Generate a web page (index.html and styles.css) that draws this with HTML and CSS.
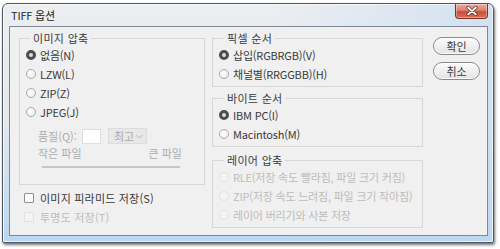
FILE: index.html
```html
<!DOCTYPE html>
<html lang="ko">
<head>
<meta charset="utf-8">
<title>TIFF 옵션</title>
<link rel="stylesheet" href="styles.css">
</head>
<body>
<div class="window">
  <div class="titlebar">
    <span class="title">TIFF 옵션</span>
    <div class="close">
      <svg width="12" height="10" viewBox="0 0 12 10"><path d="M2 1.5 L10 8.5 M10 1.5 L2 8.5" stroke="#5a2a22" stroke-width="3.2" stroke-linecap="round"/><path d="M2 1.5 L10 8.5 M10 1.5 L2 8.5" stroke="#ffffff" stroke-width="1.7" stroke-linecap="round"/></svg>
    </div>
  </div>
  <div class="frame">
    <div class="client">
      <div class="col-left">
        <fieldset class="group g-img">
          <legend>이미지 압축</legend>
          <div class="opt"><span class="radio on"></span>없음(N)</div>
          <div class="opt"><span class="radio"></span>LZW(L)</div>
          <div class="opt"><span class="radio"></span>ZIP(Z)</div>
          <div class="opt"><span class="radio"></span>JPEG(J)</div>
          <div class="quality">
            <span class="qlabel">품질(Q):</span>
            <span class="qbox"></span>
            <span class="qsel"><span>최고</span><svg width="7" height="5" viewBox="0 0 7 5"><path d="M0.5 1 L3.5 4 L6.5 1" fill="none" stroke="#b8b8b8" stroke-width="1"/></svg></span>
          </div>
          <div class="sizes"><span>작은 파일</span><span>큰 파일</span></div>
          <div class="slider"></div>
        </fieldset>
        <div class="check"><span class="cbox"></span>이미지 피라미드 저장(S)</div>
        <div class="check dis"><span class="cbox"></span>투명도 저장(T)</div>
      </div>
      <div class="col-right">
        <fieldset class="group g-pix">
          <legend>픽셀 순서</legend>
          <div class="opt"><span class="radio on"></span>삽입(RGBRGB)(V)</div>
          <div class="opt"><span class="radio"></span>채널별(RRGGBB)(H)</div>
        </fieldset>
        <fieldset class="group g-byte">
          <legend>바이트 순서</legend>
          <div class="opt"><span class="radio on"></span>IBM PC(I)</div>
          <div class="opt"><span class="radio"></span>Macintosh(M)</div>
        </fieldset>
        <fieldset class="group g-layer">
          <legend>레이어 압축</legend>
          <div class="opt dis"><span class="radio"></span>RLE(저장 속도 빨라짐, 파일 크기 커짐)</div>
          <div class="opt dis"><span class="radio"></span>ZIP(저장 속도 느려짐, 파일 크기 작아짐)</div>
          <div class="opt dis"><span class="radio"></span>레이어 버리기와 사본 저장</div>
        </fieldset>
      </div>
      <div class="buttons">
        <button class="btn">확인</button>
        <button class="btn">취소</button>
      </div>
    </div>
  </div>
</div>
</body>
</html>
```

FILE: styles.css
```css
* { box-sizing: border-box; }

html, body {
  margin: 0;
  background: #ffffff;
}

body {
  font-family: "Noto Sans CJK KR", "Noto Sans", sans-serif;
  font-size: 11px;
  color: #3a3a3a;
  width: 500px;
  height: 249px;
  overflow: hidden;
}

.window {
  margin: 3px 0 0 2px;
  width: 492px;
  height: 240px;
  border: 1px solid #4e5560;
  border-radius: 6px 6px 2px 2px;
  background:
    linear-gradient(to right, rgba(233,236,240,0) 0%, rgba(233,236,240,0) 55%, rgba(190,216,240,0.55) 100%),
    linear-gradient(to bottom, #eceef1 0%, #e3e8ed 50%, #b9d7f2 100%);
  box-shadow: inset 0 0 0 1px rgba(255,255,255,0.75), 1px 2px 3px rgba(0,0,0,0.55);
  display: flex;
  flex-direction: column;
}

.titlebar {
  height: 22px;
  display: flex;
  align-items: flex-start;
}

.title {
  margin: 3px 0 0 8px;
  font-size: 11px;
  line-height: 16px;
  color: #262626;
  letter-spacing: -0.2px;
}

.close {
  margin-left: auto;
  margin-right: 5px;
  width: 33px;
  height: 15px;
  border: 1px solid #7a3329;
  border-top: none;
  border-radius: 0 0 4px 4px;
  background: linear-gradient(to bottom, #ebb0a4 0%, #dc7e6b 45%, #c8503a 55%, #d86d55 100%);
  box-shadow: inset 0 0 0 1px rgba(255,255,255,0.35);
  display: flex;
  align-items: center;
  justify-content: center;
}

.close svg { display: block; }

.frame {
  flex: 1;
  padding: 0 5px 6px 6px;
  display: flex;
}

.client {
  flex: 1;
  border: 1px solid #7d8894;
  background: #f0f0f0;
  display: flex;
  align-items: flex-start;
  padding: 4px 7px 0 9px;
}

.col-left { width: 186px; }
.col-right { width: 211px; margin-left: 7px; }
.buttons {
  width: 47px;
  margin-left: 10px;
  margin-top: 6px;
  display: flex;
  flex-direction: column;
  gap: 7px;
}

.group {
  margin: 0;
  padding: 0 0 3px 6px;
  border: 1px solid #d7d7d7;
  min-width: 0;
}

.group legend {
  margin-left: 4px;
  padding: 0 3px;
  line-height: 14px;
  font-size: 11px;
  letter-spacing: 0.3px;
  color: #3c3c3c;
}

.g-img { padding-bottom: 16px; }
.g-byte { margin-top: 4px; }
.g-layer { margin-top: 6px; }
.col-right .group legend { margin-left: 5px; }

.opt {
  height: 19px;
  display: flex;
  align-items: center;
  gap: 4px;
  letter-spacing: -0.2px;
  white-space: nowrap;
}

.radio {
  width: 10px;
  height: 10px;
  border-radius: 50%;
  border: 1px solid #a9a9a9;
  background: radial-gradient(circle at 40% 35%, #ffffff 0%, #f2f2f2 60%, #e0e0e0 100%);
  flex: none;
}

.radio.on {
  border: 3px solid #4d4d4d;
  background: #dcdcdc;
}

.opt.dis { color: #bcbcbc; }
.opt.dis .radio {
  border-color: #e2e2e2;
  background: #f4f4f4;
}

.quality {
  margin-top: 7px;
  height: 16px;
  display: flex;
  align-items: center;
  color: #adadad;
  white-space: nowrap;
}

.qlabel { margin-left: 12px; width: 44px; }

.qbox {
  width: 19px;
  height: 15px;
  background: #ffffff;
  border: 1px solid #dedede;
}

.qsel {
  margin-left: 7px;
  width: 39px;
  height: 16px;
  background: #e8e8e8;
  border: 1px solid #dddddd;
  display: flex;
  align-items: center;
  justify-content: space-between;
  padding: 0 3px 0 5px;
  color: #a9a9a9;
  line-height: 14px;
}

.qsel svg { display: block; flex: none; }

.sizes {
  margin-top: 2px;
  padding: 0 22px 0 12px;
  display: flex;
  justify-content: space-between;
  line-height: 14px;
  color: #adadad;
}

.slider {
  margin: 6px 24px 0 16px;
  height: 2px;
  background: #c6c6c6;
}

.check {
  height: 19px;
  display: flex;
  align-items: center;
  gap: 6px;
  padding-left: 5px;
  letter-spacing: 0.2px;
}

.check:first-of-type { margin-top: 3px; }

.cbox {
  width: 10px;
  height: 10px;
  border: 1px solid #8f8f8f;
  background: #ffffff;
  border-radius: 1px;
}

.check.dis { color: #bcbcbc; }
.check.dis .cbox {
  border-color: #e0e0e0;
  background: #f3f3f3;
}

.btn {
  height: 18px;
  width: 47px;
  margin: 0;
  padding: 0;
  border: 1px solid #8a8a8a;
  border-radius: 9px;
  background: linear-gradient(to bottom, #fbfbfb 0%, #f0f0f0 50%, #e3e3e3 100%);
  font-family: "Noto Sans CJK KR", "Noto Sans", sans-serif;
  font-size: 11px;
  line-height: 14px;
  color: #3a3a3a;
  box-shadow: inset 0 0 0 1px rgba(255,255,255,0.8);
}
```
